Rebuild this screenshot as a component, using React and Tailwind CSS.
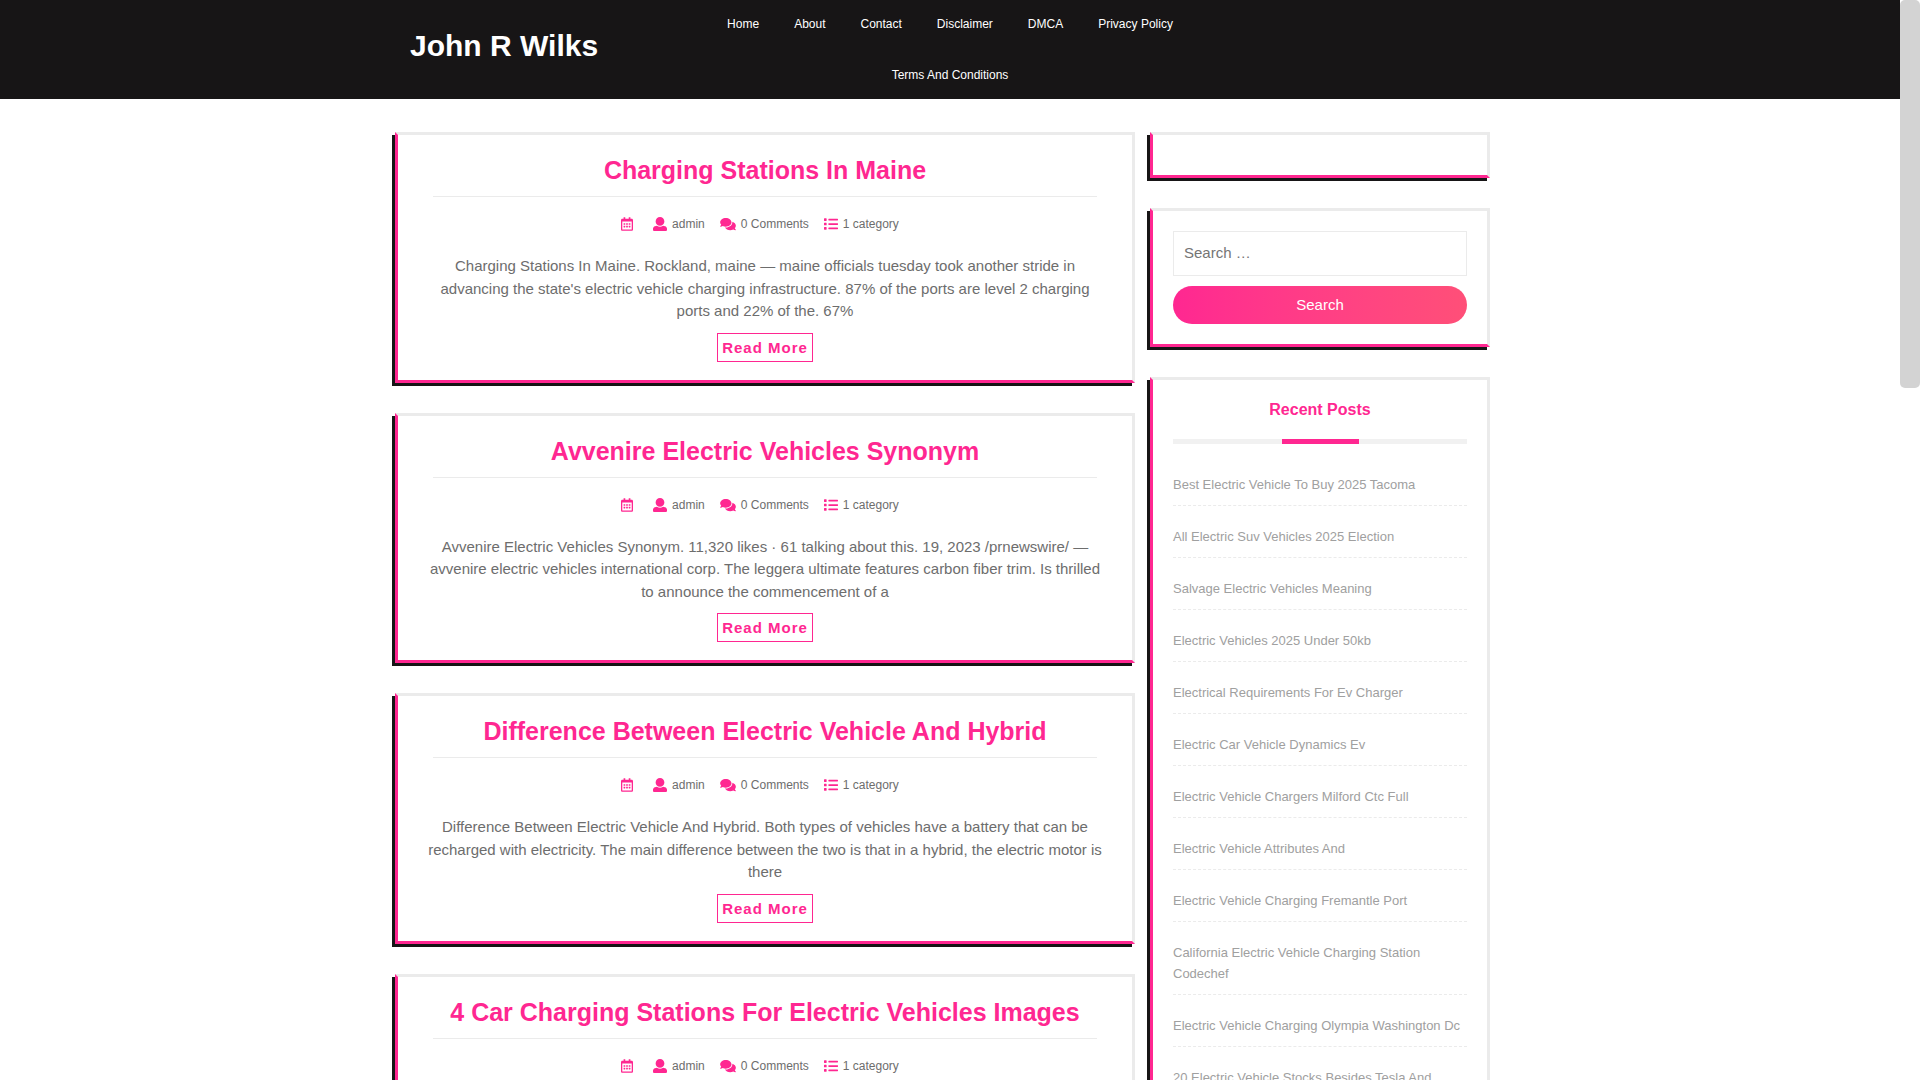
import React from "react";
import { FaRegCalendarAlt, FaComments, FaList } from "react-icons/fa";

const navLinks = ["Home", "About", "Contact", "Disclaimer", "DMCA", "Privacy Policy", "Terms And Conditions"];

const posts = [
  {
    title: "Charging Stations In Maine",
    text: "Charging Stations In Maine. Rockland, maine — maine officials tuesday took another stride in advancing the state's electric vehicle charging infrastructure. 87% of the ports are level 2 charging ports and 22% of the. 67%",
  },
  {
    title: "Avvenire Electric Vehicles Synonym",
    text: "Avvenire Electric Vehicles Synonym. 11,320 likes · 61 talking about this. 19, 2023 /prnewswire/ — avvenire electric vehicles international corp. The leggera ultimate features carbon fiber trim. Is thrilled to announce the commencement of a",
  },
  {
    title: "Difference Between Electric Vehicle And Hybrid",
    text: "Difference Between Electric Vehicle And Hybrid. Both types of vehicles have a battery that can be recharged with electricity. The main difference between the two is that in a hybrid, the electric motor is there",
  },
  {
    title: "4 Car Charging Stations For Electric Vehicles Images",
  },
];

const recent = [
  "Best Electric Vehicle To Buy 2025 Tacoma",
  "All Electric Suv Vehicles 2025 Election",
  "Salvage Electric Vehicles Meaning",
  "Electric Vehicles 2025 Under 50kb",
  "Electrical Requirements For Ev Charger",
  "Electric Car Vehicle Dynamics Ev",
  "Electric Vehicle Chargers Milford Ctc Full",
  "Electric Vehicle Attributes And",
  "Electric Vehicle Charging Fremantle Port",
  "California Electric Vehicle Charging Station Codechef",
  "Electric Vehicle Charging Olympia Washington Dc",
  "20 Electric Vehicle Stocks Besides Tesla And",
];

const cardClass =
  "border-[3px] border-t-[#ebebeb] border-r-[#ebebeb] border-b-[#ff2791] border-l-[#ff2791] bg-white shadow-[-3px_3px_0_#171516]";

function UserIcon() {
  return (
    <svg viewBox="0 0 512 512" className="size-3.5 fill-[#ff2791]" aria-hidden="true">
      <path d="M256 0c88.366 0 160 71.634 160 160s-71.634 160-160 160S96 248.366 96 160 167.634 0 256 0zm183.283 333.821l-71.313-17.828c-74.923 53.89-165.738 41.864-223.94 0l-71.313 17.828C29.981 344.505 0 382.903 0 426.955V464c0 26.51 21.49 48 48 48h416c26.51 0 48-21.49 48-48v-37.045c0-44.052-29.981-82.45-72.717-93.134z" />
    </svg>
  );
}

function PostCard({ title, text }) {
  return (
    <article className={`${cardClass} px-[35px] pt-5 pb-[18px] text-center`}>
      <h2 className="border-b border-[#ebebeb] pb-[11px] text-[25px] leading-[30px] font-bold text-[#ff2791]">
        <a href="#">{title}</a>
      </h2>
      <div className="flex items-center justify-center gap-[15px] pt-[18px] pr-[10px] text-xs leading-[18px]">
        <FaRegCalendarAlt className="mr-[5px] h-3.5 w-3 text-[#ff2791]" />
        <a href="#" className="flex items-center gap-[5px]"><UserIcon />admin</a>
        <span className="flex items-center gap-[5px]"><FaComments className="h-3.5 w-4 text-[#ff2791]" />0 Comments</span>
        <span className="flex items-center gap-[5px]"><FaList className="size-3.5 text-[#ff2791]" />1 category</span>
      </div>
      {text && <p className="-mx-2 pt-[22px] text-[15px] leading-normal">{text}</p>}
      <a
        href="#"
        className="mt-2.5 inline-block border border-[#ff2791] px-1 py-[3px] align-top text-[15px] leading-[21px] font-bold tracking-[1px] text-[#ff2791]"
      >
        Read More
      </a>
    </article>
  );
}

export default function App() {
  return (
    <div className="flex h-screen overflow-hidden bg-white font-['Liberation_Sans',Arial,sans-serif] text-[#6d6d6d]">
      <div className="min-w-0 flex-1">
        <header className="bg-[#171516] text-white">
          <div className="mx-auto flex max-w-[1140px]">
            <div className="w-1/4 pt-[23px] pl-[30px]">
              <a href="#" className="text-3xl leading-[45px] font-bold">John R Wilks</a>
            </div>
            <nav className="w-1/2">
              <ul className="flex flex-wrap justify-center gap-x-px gap-y-[3px] text-xs leading-[18px]">
                {navLinks.map((l) => (
                  <li key={l}>
                    <a href="#" className="block px-[17px] py-[15px]">{l}</a>
                  </li>
                ))}
              </ul>
            </nav>
          </div>
        </header>

        <div className="mx-auto flex max-w-[1140px] items-start gap-[15px] pt-[33px] pr-[30px] pl-[15px]">
          <main className="flex min-w-0 flex-1 flex-col gap-[30px]">
            {posts.map((p) => (
              <PostCard key={p.title} {...p} />
            ))}
          </main>
          <aside className="flex w-[340px] flex-col gap-[30px]">
            <section className={`${cardClass} p-5`} />
            <section className={`${cardClass} p-5`}>
              <form className="flex flex-col gap-2.5 text-[15px]" onSubmit={(e) => e.preventDefault()}>
                <input
                  type="search"
                  aria-label="Search"
                  placeholder="Search …"
                  className="h-[45px] border border-[#ebebeb] px-2.5 pb-0.5 placeholder:text-[#757575]"
                />
                <button type="submit" className="h-[38px] rounded-[20px] bg-linear-to-r from-[#ff2791] to-[#ff4f78] text-white">
                  Search
                </button>
              </form>
            </section>
            <section className={`${cardClass} p-5`}>
              <h3 className="pt-0.5 pb-[21px] text-center text-base leading-4 font-bold text-[#ff2791]">Recent Posts</h3>
              <div className="flex h-[5px] justify-center bg-[#f1f1f1]">
                <div className="w-[77px] bg-[#ff2791]" />
              </div>
              <ul className="pt-2.5 text-[13px] leading-[21px] text-[#a0a0a0]">
                {recent.map((r) => (
                  <li key={r} className="border-b border-dashed border-[#ebebeb] pt-5 pb-2.5">
                    <a href="#">{r}</a>
                  </li>
                ))}
              </ul>
            </section>
          </aside>
        </div>
      </div>
      <div className="w-5 shrink-0" aria-hidden="true">
        <div className="h-[388px] rounded-[5px] bg-[#d3d3d3]" />
      </div>
    </div>
  );
}
